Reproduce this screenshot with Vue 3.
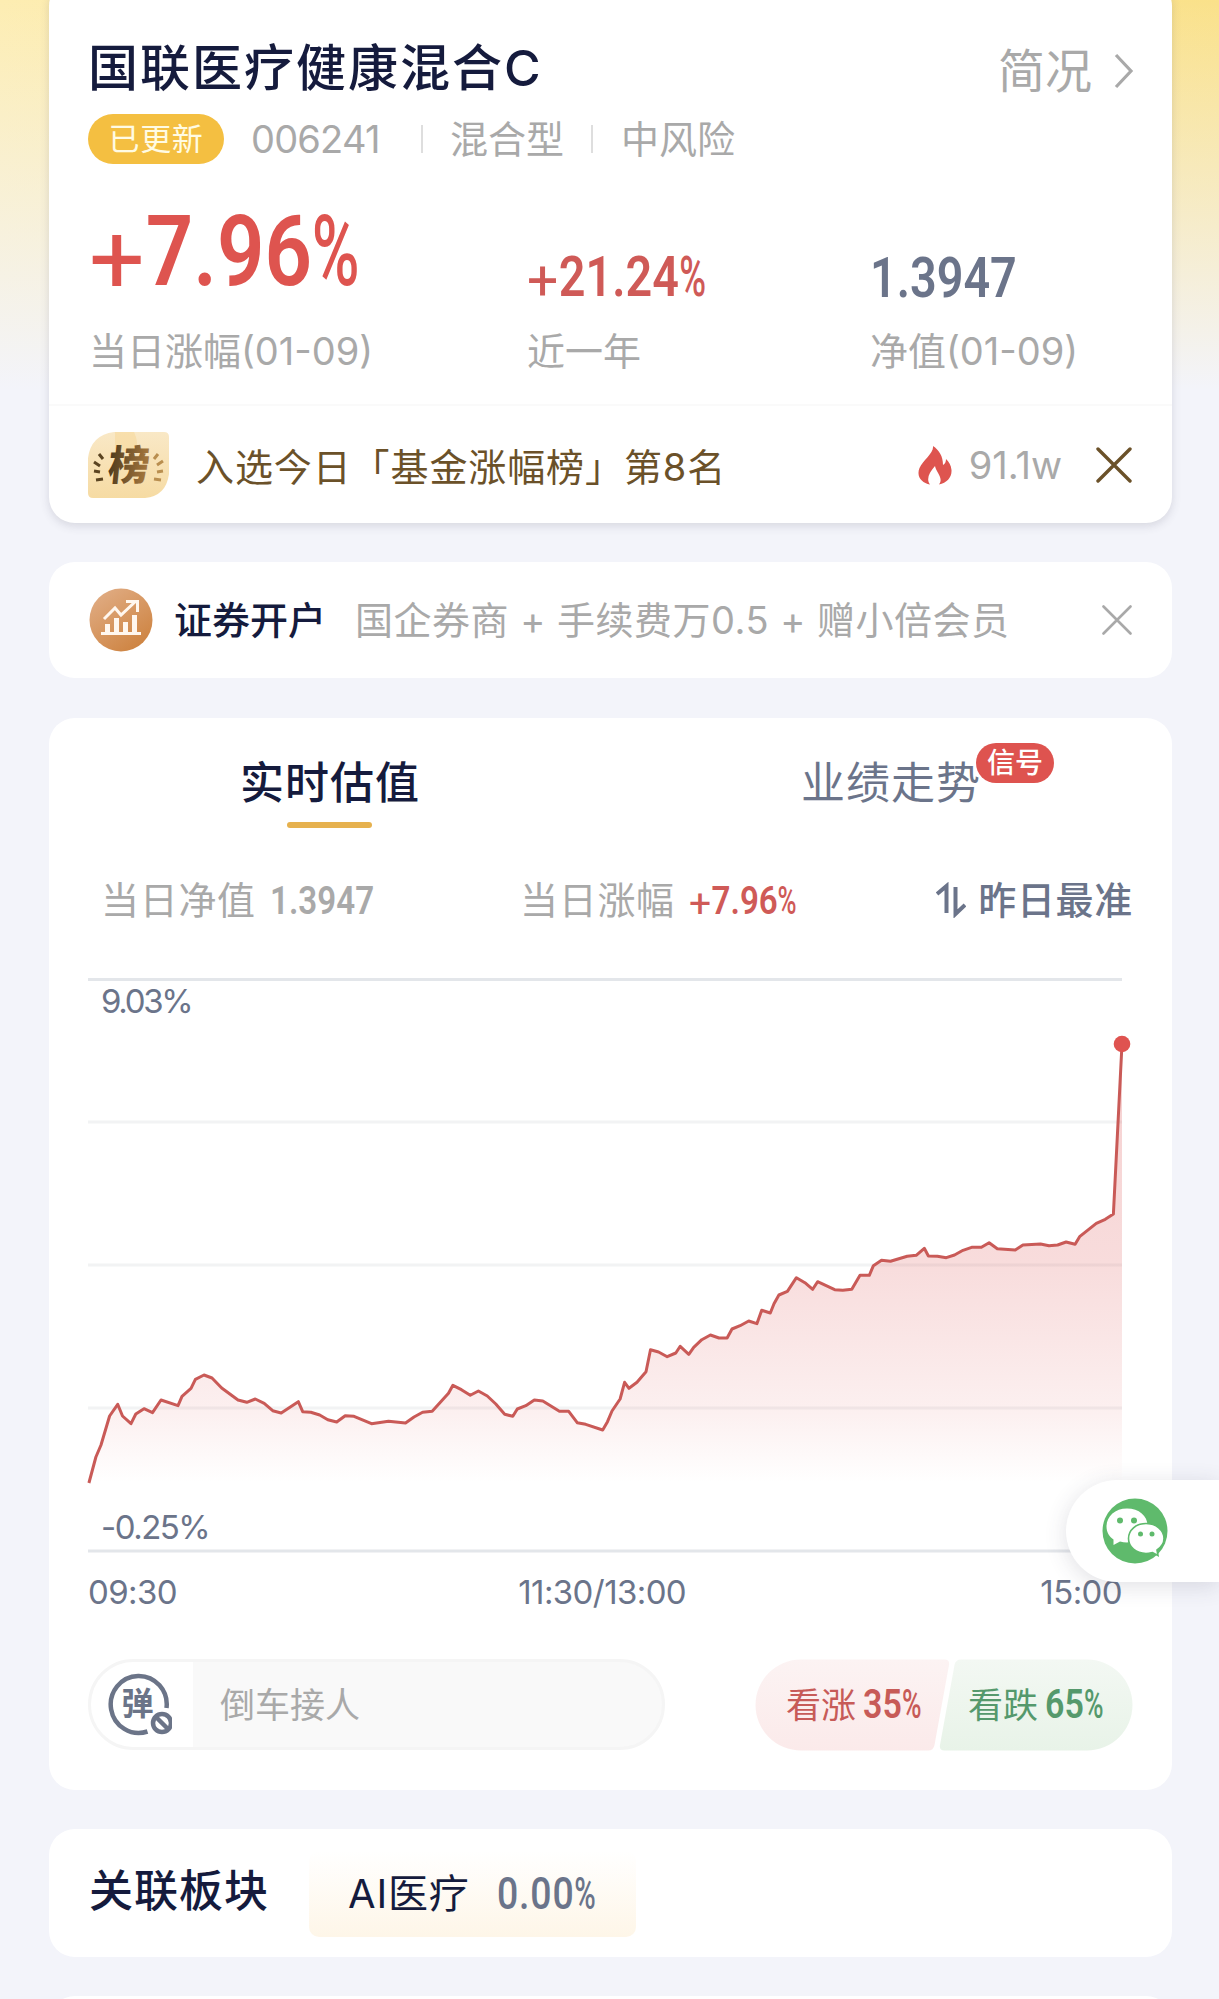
<script setup>
import { computed } from "vue";

const stats = [
  { sign: "+", value: "7.96", pct: true, label: "当日涨幅(01-09)", kind: "stat-main" },
  { sign: "+", value: "21.24", pct: true, label: "近一年", kind: "stat-year" },
  { sign: "", value: "1.3947", pct: false, label: "净值(01-09)", kind: "stat-nav" },
];

// chart area: 1034 x 572, origin at the top-left grid corner
const points = [
  [0.9, 504], [7.9, 478], [13, 466], [21.6, 437], [29.7, 425.3], [34.5, 437], [43, 444.7], [47.8, 435],
  [56, 429.7], [64.5, 433.7], [73, 421], [90, 426.7], [94, 417.3], [103, 409.3], [107.4, 400.3], [116, 396],
  [124, 399], [133.7, 409], [150, 421], [158.8, 423.3], [167.3, 420], [176.2, 424.3], [184.7, 431.7], [193.2, 434],
  [210.3, 422.7], [214.7, 432.7], [222.8, 433.3], [231.7, 436], [239.8, 440.7], [248.7, 443], [257.2, 436.7], [266, 437.3],
  [283.5, 444.7], [300.5, 442.3], [317.5, 444], [326, 438], [334.6, 433.3], [344.2, 432.3], [360.5, 414.3], [364.9, 406.3],
  [373.4, 410.7], [382.3, 416.3], [390.4, 412], [399.3, 417], [407.8, 425], [416.7, 435.3], [424.8, 437.3], [429.3, 430],
  [437.8, 426.7], [446.3, 421], [454.8, 422], [471.4, 432.3], [480.7, 432.3], [489.2, 443.7], [497.7, 445.3], [514.7, 451],
  [519.5, 442.7], [524, 432], [532.1, 420], [536.6, 403.3], [541, 409.3], [549, 403.3], [558, 392.7], [562.5, 370.7],
  [570.6, 373], [579.2, 377.7], [587.8, 374], [592.2, 367.3], [600.8, 375.3], [605.7, 368.3], [613.8, 360.7], [622.4, 356],
  [631, 359], [639.1, 359], [644, 350], [652.1, 346.7], [660.7, 342], [668.9, 344.7], [673.7, 331.3], [682.3, 334],
  [686, 324.7], [690.9, 316], [699.4, 312.3], [708.4, 298.7], [716.9, 303.7], [724.7, 310.3], [729.6, 302.7], [746.7, 310.7],
  [754.8, 311.3], [763.8, 310.3], [772, 296.3], [781.3, 296.3], [785.4, 286.7], [793.5, 281.3], [802.5, 282.3], [819.2, 277.3],
  [828.2, 276.3], [836.3, 269.3], [840.4, 277], [849.4, 277.3], [858.3, 278.7], [866.5, 276], [875, 271.3], [883.6, 268.3],
  [893.4, 268.3], [901.1, 263.7], [909.3, 269.7], [927.2, 271], [934.9, 266], [952.5, 265], [961, 266.7], [969.6, 266],
  [978.1, 263], [987.1, 265.3], [991.6, 257.7], [1008.3, 244.3], [1017.3, 240.3], [1025.4, 235], [1034, 65],
];

const linePath = computed(() => "M" + points.map((p) => p.join(" ")).join("L"));
const areaPath = computed(() => `${linePath.value}V504H0Z`);
</script>

<template>
  <div class="page">
    <section class="card fund">
      <header class="fund-head">
        <h1 class="fund-name">国联医疗健康混合C</h1>
        <a class="profile">
          <span>简况</span>
          <svg width="22" height="38" viewBox="0 0 22 38" fill="none" stroke="#a9a9a9" stroke-width="3.2">
            <path d="M3 3l15 16L3 35" />
          </svg>
        </a>
      </header>

      <div class="meta">
        <span class="updated">已更新</span>
        <span class="code">006241</span>
        <i class="sep"></i>
        <span class="type">混合型</span>
        <i class="sep"></i>
        <span class="risk">中风险</span>
      </div>

      <div class="stats">
        <div v-for="s in stats" :key="s.label" class="stat" :class="s.kind">
          <div class="stat-value">
            <span class="num"><span v-if="s.sign" class="plus">{{ s.sign }}</span>{{ s.value }}<span v-if="s.pct" class="pct">%</span></span>
          </div>
          <div class="stat-label">{{ s.label }}</div>
        </div>
      </div>

      <div class="rank">
        <div class="rank-icon">
          <svg width="81" height="66" viewBox="0 0 81 66">
            <defs>
              <linearGradient id="rankBg" x1="0" y1="0" x2="0" y2="1">
                <stop offset="0" stop-color="#f9e8c6" />
                <stop offset="1" stop-color="#f6dba3" />
              </linearGradient>
              <linearGradient id="rankInk" x1="0" y1="0" x2="1" y2="0">
                <stop offset="0" stop-color="#4f3b1d" />
                <stop offset="1" stop-color="#a97a3f" />
              </linearGradient>
            </defs>
            <path d="M26 0H76Q81 0 81 5V42Q78 64 57 66H5Q0 66 0 61V26Q3 3 26 0Z" fill="url(#rankBg)" />
            <path d="M27 0H46Q51 10 48 21L27 17Z" fill="#f6d99b" opacity=".6" />
            <g stroke="#5b4421" stroke-width="3">
              <path d="M11 22l4 5M6 30l6 4M6 39l6 1M8 48l7-1" />
            </g>
            <g stroke="#b98e4f" stroke-width="3">
              <path d="M70 22l-4 5M75 29l-6 4M75 39l-6 1M73 48l-7-1" />
            </g>
            <text x="20" y="48" class="rank-char" fill="url(#rankInk)" transform="skewX(-6) translate(4 0)">榜</text>
          </svg>
        </div>
        <span class="rank-text">入选今日「基金涨幅榜」第8名</span>
        <span class="hot">
          <svg width="34" height="39" viewBox="0 0 34 39">
            <path
              d="M15 0C16 7 5 14 1.500 22C-2 31 4 37 12 38.500C8 33 11 27 17 20C18 26 26 32 21 38.500C29 37 34 31 33.500 24C33 19 31 16 28 13C28 16 27 18 25 19C25 10 21 4 15 0Z"
              fill="#de544f"
            />
          </svg>
          <span class="hot-num">91.1w</span>
        </span>
        <svg class="rank-close" width="36" height="36" viewBox="0 0 36 36" stroke="#6b5129" stroke-width="3.400" stroke-linecap="round">
          <path d="M2 2l32 32M34 2L2 34" />
        </svg>
      </div>
    </section>

    <section class="card broker">
      <svg class="broker-icon" width="64" height="64" viewBox="0 0 64 64" fill="none">
        <defs>
          <linearGradient id="brokerBg" x1="0" y1="0" x2=".7" y2="1">
            <stop offset="0" stop-color="#e2b08a" />
            <stop offset="1" stop-color="#ce8442" />
          </linearGradient>
        </defs>
        <circle cx="32" cy="32" r="31.500" fill="url(#brokerBg)" />
        <g stroke="#fff7ef" stroke-width="3">
          <path d="M15 31L26 20L32 27L47 13M37 13.500H48.500V24" />
          <path d="M12 45.500H52" />
        </g>
        <path d="M16 36h5v10h-5zM25 30h5v16h-5zM34 34h5v12h-5zM43 27h5v19h-5z" fill="#fff7ef" />
      </svg>
      <span class="broker-title">证券开户</span>
      <span class="broker-desc">国企券商 + 手续费万0.5 + 赠小倍会员</span>
      <svg class="broker-close" width="30" height="30" viewBox="0 0 30 30" stroke="#a9a9a9" stroke-width="2.600" stroke-linecap="round">
        <path d="M1.500 1.500l27 27M28.500 1.500l-27 27" />
      </svg>
    </section>

    <section class="card trend">
      <nav class="tabs">
        <div class="tab active">实时估值</div>
        <div class="tab">业绩走势<span class="signal">信号</span></div>
      </nav>

      <div class="summary">
        <span class="sum-label">当日净值</span>
        <span class="sum-num nav"><span class="num">1.3947</span></span>
        <span class="sum-label">当日涨幅</span>
        <span class="sum-num rise"><span class="num"><span class="plus">+</span>7.96<span class="pct">%</span></span></span>
        <svg class="sort" width="30" height="36" viewBox="0 0 30 36" fill="none" stroke="#6b748a" stroke-width="4">
          <path d="M10.500 31V4L1 12M19.500 5V32L29 23" />
        </svg>
        <span class="sum-source">昨日最准</span>
      </div>

      <div class="chart">
        <svg width="1050" height="580" viewBox="0 0 1050 580" fill="none">
          <defs>
            <linearGradient id="area" gradientUnits="userSpaceOnUse" x1="0" y1="65" x2="0" y2="504">
              <stop offset="0" stop-color="#dc5050" stop-opacity=".27" />
              <stop offset=".5" stop-color="#dc5050" stop-opacity=".2" />
              <stop offset=".83" stop-color="#dc5050" stop-opacity=".09" />
              <stop offset="1" stop-color="#dc5050" stop-opacity="0" />
            </linearGradient>
          </defs>
          <path d="M0 143H1034M0 286H1034M0 429H1034" stroke="#f2f3f4" stroke-width="3" />
          <path d="M0 0.500H1034M0 572H1034" stroke="#e3e6ea" stroke-width="3" />
          <path :d="areaPath" fill="url(#area)" />
          <path :d="linePath" stroke="#c95a57" stroke-width="3" stroke-linejoin="round" />
          <circle cx="1034" cy="65" r="8.300" fill="#df5350" />
        </svg>
        <span class="y-label y-max">9.03%</span>
        <span class="y-label y-min">-0.25%</span>
      </div>
      <div class="x-axis">
        <span>09:30</span>
        <span class="x-mid">11:30/13:00</span>
        <span>15:00</span>
      </div>

      <div class="actions">
        <div class="danmu">
          <div class="danmu-toggle">
            <svg width="64" height="64" viewBox="0 0 64 64" fill="none" stroke="#6b7488">
              <path d="M58.500 35A28 28.500 0 1 0 39.500 58.500" stroke-width="4.500" />
              <circle cx="54" cy="50" r="9" stroke-width="4.500" />
              <path d="M48 44l12 12" stroke-width="4.500" />
              <text x="13.500" y="42" class="danmu-char" fill="#6b7488" stroke="none">弹</text>
            </svg>
          </div>
          <div class="danmu-input">倒车接人</div>
        </div>
        <div class="vote">
          <svg class="vote-bg" width="378" height="92" viewBox="0 0 378 92">
            <defs>
              <linearGradient id="up" x1="0" y1="0" x2="0" y2="1">
                <stop offset="0" stop-color="#fcf3f3" />
                <stop offset="1" stop-color="#fbeaea" />
              </linearGradient>
              <linearGradient id="down" x1="0" y1="0" x2="0" y2="1">
                <stop offset="0" stop-color="#f3f8f3" />
                <stop offset="1" stop-color="#e8f3e8" />
              </linearGradient>
            </defs>
            <path d="M46 0.500H189.500Q195 0.500 194 6L179.500 86Q178.500 91.500 173 91.500H46A45.500 45.500 0 0 1 46 0.500Z" fill="url(#up)" />
            <path d="M206 0.500H332A45.500 45.500 0 0 1 332 91.500H189.500Q184 91.500 185 86L199.500 6Q200.500 0.500 206 0.500Z" fill="url(#down)" />
          </svg>
          <div class="vote-side up">看涨<span class="num">35<span class="pct">%</span></span></div>
          <div class="vote-side down">看跌<span class="num">65<span class="pct">%</span></span></div>
        </div>
      </div>
    </section>

    <section class="card sector">
      <h2 class="sector-title">关联板块</h2>
      <div class="sector-tag">
        <span class="sector-name">AI医疗</span>
        <span class="num sector-num">0.00<span class="pct">%</span></span>
      </div>
    </section>

    <section class="card next"></section>

    <div class="wechat">
      <svg width="66" height="66" viewBox="0 0 66 66">
        <circle cx="33" cy="33" r="32.500" fill="#5fba6c" />
        <path d="M25 10.500C13 10.500 4.500 18.500 4.500 28.500C4.500 34 7 38.500 11.500 41.500L11.500 47L18 43.500C31 47 45.500 40 45.500 27.500C45.500 18 37 10.500 25 10.500Z" fill="#fff" />
        <path
          d="M44 25.500C34 25.500 26.500 32 26.500 40.500C26.500 49 34 55.500 44 55.500C46.500 55.500 48.500 55 50.500 54.500L56 57.500L55 52C59.500 49 62 45 62 40.500C62 32 54 25.500 44 25.500Z"
          fill="#fff"
          stroke="#5fba6c"
          stroke-width="1.600"
        />
        <g fill="#5fba6c">
          <circle cx="18" cy="22.500" r="3" />
          <circle cx="32" cy="22.500" r="3" />
          <circle cx="38.500" cy="36" r="2.500" />
          <circle cx="50" cy="36" r="2.500" />
        </g>
      </svg>
    </div>
  </div>
</template>

<style>
body {
  margin: 0;
  background: #f3f4fa;
}
</style>

<style scoped>
.page {
  position: relative;
  box-sizing: border-box;
  width: 1219px;
  height: 1999px;
  padding: 0 47px 0 49px;
  overflow: hidden;
  font-family: Inter, "Noto Sans CJK SC", "Noto Sans", sans-serif;
  font-size: 38px;
  line-height: 56px;
  color: #a9a9a9;
  white-space: nowrap;
  background:
    linear-gradient(180deg, rgba(243, 244, 250, 0) 0, #f3f4fa 390px),
    linear-gradient(90deg, #fdedb2 0, #fae18a 100%);
}

.card {
  box-sizing: border-box;
  background: #fff;
  border-radius: 26px;
}

/* condensed figures */
.num {
  display: inline-block;
  font-family: Roboto, sans-serif;
  font-weight: 600;
  transform: scaleX(0.85);
  transform-origin: 0 50%;
}

.pct {
  display: inline-block;
  font-weight: 500;
  transform: scaleX(0.78);
  transform-origin: 0 50%;
}

/* sits on the baseline, wider than the digits */
.plus {
  display: inline-block;
  width: 0.68em;
  font-weight: 400;
  transform: translateY(0.08em) scaleX(1.18);
  transform-origin: 0 50%;
}

.fund {
  height: 543px;
  margin-top: -20px;
  padding: 58px 40px 0 39px;
  box-shadow: 0 3px 10px rgba(60, 65, 90, 0.16);
}

.fund-head {
  display: flex;
  justify-content: space-between;
  height: 60px;
}

.fund-name {
  margin: 0;
  font-size: 50px;
  font-weight: 500;
  line-height: 60px;
  letter-spacing: 2px;
  color: #151b3d;
}

.profile {
  display: flex;
  align-items: center;
  gap: 21px;
  height: 66px;
  margin-right: -3px;
  font-size: 47px;
}

.meta {
  display: flex;
  align-items: center;
  height: 50px;
  margin-top: 16px;
  line-height: 58px;
}

.updated {
  width: 136px;
  height: 50px;
  border-radius: 25px;
  background: #f4bf41;
  color: #fffbe3;
  font-size: 31px;
  line-height: 50px;
  letter-spacing: 0.6px;
  text-align: center;
}

.code {
  width: 170px;
  margin-left: 27px;
  letter-spacing: -0.8px;
}

.sep {
  width: 2px;
  height: 28px;
  background: #dedede;
}

.type {
  width: 113px;
  margin: 0 28px 0 27px;
}

.risk {
  margin-left: 28px;
}

.stats {
  display: grid;
  grid-template-columns: 438px 343px 1fr;
  padding-left: 1px;
  margin-top: 26px;
}

.stat-value {
  height: 120px;
  display: flex;
  align-items: flex-end;
}

.stat-main .num {
  font-size: 98px;
  line-height: 116px;
  color: #de544f;
}

.stat-year .num,
.stat-nav .num {
  font-size: 55px;
  line-height: 63px;
  color: #cf5a57;
}

.stat-year .num {
  line-height: 66px;
}

.stat-nav .num {
  color: #6b748a;
}

.stat-label {
  margin-top: 13px;
}

.rank {
  display: flex;
  align-items: center;
  height: 118px;
  margin: 25px -40px 0 -39px;
  padding: 0 40px 0 39px;
  border-top: 2px solid #fafafa;
}

.rank-icon {
  height: 66px;
}

.rank-char {
  font-size: 41px;
  font-weight: 900;
}

.rank-text {
  margin-left: 27px;
  padding-top: 3px;
  color: #6b5129;
  letter-spacing: 0.9px;
}

.hot {
  display: flex;
  align-items: center;
  gap: 17px;
  margin-left: auto;
}

.hot-num {
  letter-spacing: 0;
}

.rank-close {
  margin-left: 34px;
}

.broker {
  display: flex;
  align-items: center;
  height: 116px;
  margin-top: 39px;
  padding: 0 40px;
}

.broker-title {
  margin-left: 21px;
  font-weight: 500;
  color: #151b3d;
}

.broker-desc {
  margin-left: 29px;
  letter-spacing: 0.5px;
}

.broker-close {
  margin-left: auto;
}

.trend {
  height: 1072px;
  margin-top: 40px;
  padding: 29px 39px 0;
}

.tabs {
  display: flex;
  height: 82px;
}

.tab {
  position: relative;
  width: 180px;
  margin-left: 152px;
  font-size: 44px;
  line-height: 72px;
  letter-spacing: 1px;
  color: #6b748a;
}

.tab + .tab {
  margin-left: 381px;
}

.tab.active {
  font-weight: 500;
  color: #151b3d;
}

.tab.active::after {
  content: "";
  position: absolute;
  left: 47px;
  top: 75px;
  width: 85px;
  height: 6px;
  border-radius: 3px;
  background: #e6b14e;
}

.signal {
  position: absolute;
  left: 175px;
  top: -4px;
  width: 78px;
  height: 40px;
  border-radius: 20px;
  background: #de534f;
  color: #fff;
  font-size: 28px;
  font-weight: 500;
  line-height: 41px;
  letter-spacing: 0;
  text-align: center;
}

.summary {
  display: flex;
  align-items: center;
  height: 56px;
  margin-top: 43px;
  padding-left: 13px;
}

.sum-label {
  width: 154px;
  letter-spacing: 0.7px;
}

.sum-num .num {
  font-size: 39px;
}

.sum-num {
  width: 116px;
  margin-left: 15px;
}

.sum-num.nav {
  margin-right: 134px;
}

.sum-num.rise {
  color: #cf5a57;
}

.sort {
  margin-left: auto;
}

.sum-source {
  margin: 0 0 0 12px;
  font-weight: 500;
  letter-spacing: 0.7px;
  color: #6b748a;
}

.chart {
  position: relative;
  height: 580px;
  margin-top: 51px;
}

.chart svg {
  display: block;
  overflow: visible;
}

.y-label {
  position: absolute;
  left: 13px;
  font-size: 33px;
  line-height: 40px;
  letter-spacing: -1.5px;
  color: #6b748a;
}

.y-max {
  top: 2px;
  letter-spacing: -2.3px;
}

.y-min {
  top: 528px;
}

.x-axis {
  display: flex;
  justify-content: space-between;
  width: 1034px;
  margin-top: 13px;
  font-size: 33px;
  line-height: 41px;
  letter-spacing: -0.6px;
  color: #6b748a;
}

.x-mid {
  margin-right: 13px;
}

.actions {
  display: flex;
  justify-content: space-between;
  width: 1045px;
  margin-top: 46px;
}

.danmu {
  box-sizing: border-box;
  display: flex;
  width: 577px;
  height: 91px;
  border: 3px solid #f5f5f5;
  border-radius: 46px;
  background: #f9f9f9;
  overflow: hidden;
}

.danmu-toggle {
  display: flex;
  align-items: center;
  width: 102px;
  padding-left: 17px;
  box-sizing: border-box;
  background: #fff;
}

.danmu-char {
  font-size: 32px;
  font-weight: 700;
}

.danmu-input {
  padding-left: 27px;
  font-size: 35px;
  line-height: 86px;
}

.vote {
  position: relative;
  display: flex;
  width: 378px;
  height: 92px;
}

.vote-bg {
  position: absolute;
  inset: 0;
}

.vote-side {
  position: relative;
  width: 151px;
  padding-left: 31px;
  font-size: 35px;
  line-height: 92px;
}

.vote-side .num {
  margin-left: 7px;
  font-size: 40px;
}

.vote-side.up {
  color: #c75b58;
}

.vote-side.down {
  color: #55996c;
}

.sector {
  display: flex;
  height: 128px;
  margin-top: 39px;
  padding: 22px 40px 0;
}

.sector-title {
  margin: 0;
  font-size: 44px;
  font-weight: 500;
  line-height: 81px;
  letter-spacing: 1px;
  color: #151b3d;
}

.sector-tag {
  box-sizing: border-box;
  display: flex;
  align-items: center;
  width: 327px;
  height: 86px;
  margin-left: 40px;
  padding-left: 39px;
  border-radius: 10px;
  background: linear-gradient(180deg, #fff, #fef6e8);
  color: #151b3d;
}

.sector-name {
  width: 149px;
  font-size: 40px;
  letter-spacing: 0.8px;
}

.sector-num {
  font-size: 44px;
  font-weight: 500;
  letter-spacing: 1px;
  color: #6b748a;
}

.next {
  height: 60px;
  margin-top: 39px;
}

.wechat {
  position: absolute;
  right: 0;
  top: 1480px;
  box-sizing: border-box;
  width: 153px;
  height: 102px;
  padding: 18px 0 0 36px;
  border-radius: 51px 0 0 51px;
  background: #fff;
  box-shadow: 0 4px 22px rgba(60, 65, 90, 0.16);
}
</style>
